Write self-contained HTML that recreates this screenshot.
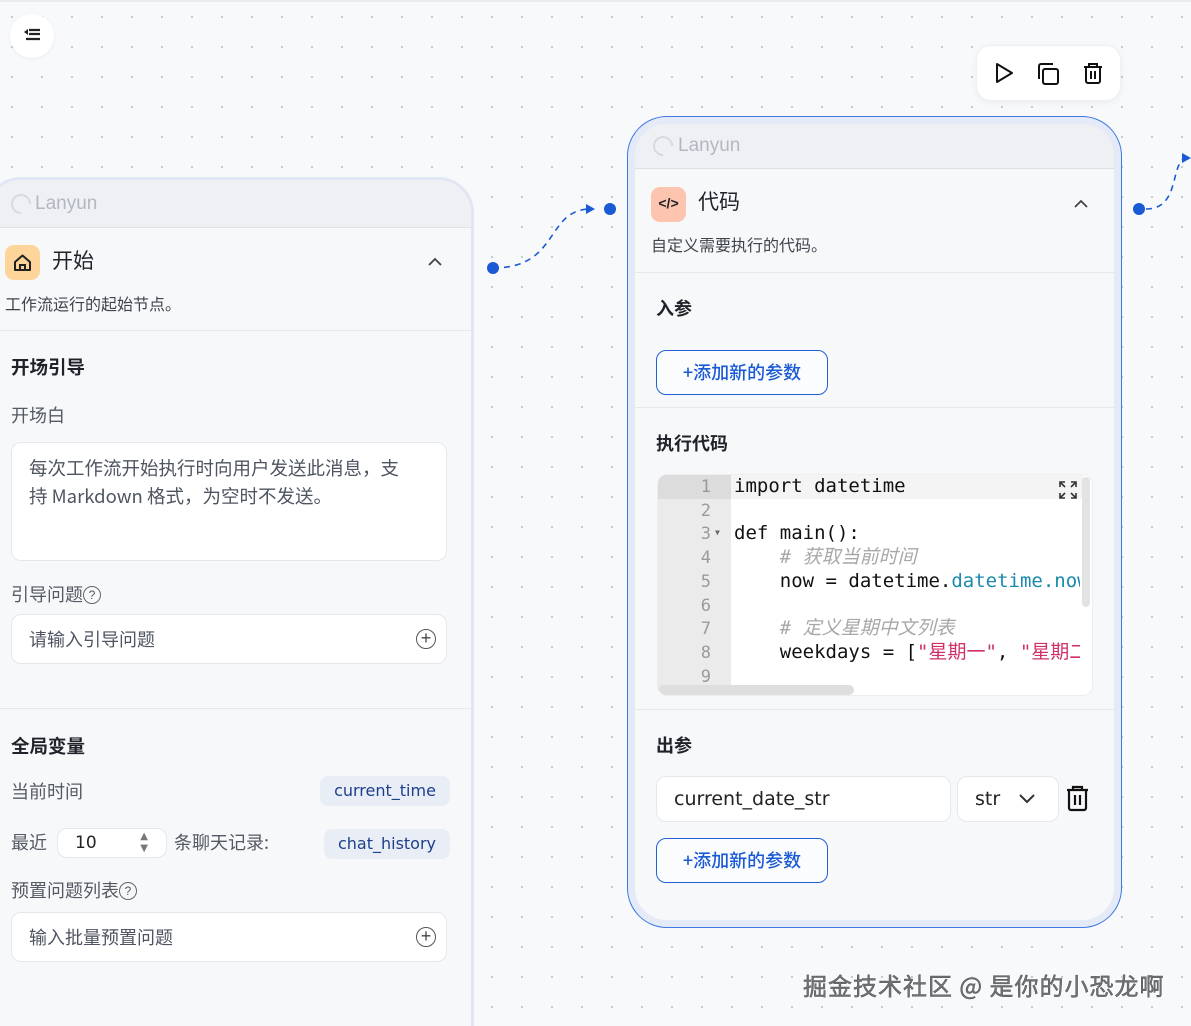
<!DOCTYPE html>
<html><head><meta charset="utf-8"><style>
*{box-sizing:border-box;margin:0;padding:0}
html,body{width:1191px;height:1026px;overflow:hidden}
body{position:relative;background:#f8f9fb;font-family:"Liberation Sans","Noto Sans CJK SC",sans-serif;color:#1f2329;
background-image:radial-gradient(circle,#c3c7cf 1px,transparent 1.3px);background-size:30px 30px;background-position:-3px 2px}
.abs{position:absolute}
.topline{position:absolute;left:0;top:0;width:1191px;height:2px;background:#e9ebef}
.menu{left:10px;top:14px;width:44px;height:44px;border-radius:50%;background:#fff;box-shadow:0 1px 4px rgba(0,0,0,.05)}
.card{position:absolute;background:#f7f8fa;overflow:hidden}
.hdr{height:50px;background:#eef0f4;border-bottom:1px solid #dfe2e7;color:#b3b8c0;font-size:19px;display:flex;align-items:center;padding-left:24px;position:relative}
.hdr .spin{position:absolute;width:20px;height:20px;border:2px solid #d6d9de;border-right-color:transparent;border-radius:50%;transform:rotate(45deg)}
.sec{border-bottom:1px solid #e6e8ec}
.cjk{font-family:"Noto Sans CJK SC",sans-serif}
.lbl{font-size:18px;color:#545a63}
.input{position:absolute;background:#fff;border:1px solid #e4e7ec;border-radius:10px;font-size:18px;color:#4e5560}
.tag{position:absolute;background:#e9edf5;border-radius:8px;color:#1d3f8c;text-align:center;line-height:30px;font-family:"DejaVu Sans",sans-serif;font-size:16px}
.btn{position:absolute;border:1.5px solid #2260d6;border-radius:10px;color:#1a5ad4;font-size:18px;font-weight:500;text-align:center;background:#fbfcfe}
.code{font-family:"DejaVu Sans Mono","Liberation Mono","Noto Sans CJK SC",monospace;font-size:19px}
.q{border:1.4px solid #666;border-radius:50%;display:inline-block;width:18px;height:18px;line-height:16px;text-align:center;font-size:12px;vertical-align:2px;font-family:"Liberation Sans",sans-serif}
.plus{position:absolute;right:10px;top:14px;width:20px;height:20px;border:1.6px solid #555;border-radius:50%;line-height:16px;text-align:center;font-size:18px;color:#444;font-family:"Liberation Sans",sans-serif}
</style></head><body>
<div class="topline"></div>
<div class="abs menu"><svg width="44" height="44" viewBox="0 0 44 44"><path d="M18 15l-4 3 4 3z" fill="#222"/><path d="M19 16h11M19 20h11M16 25h14" stroke="#222" stroke-width="2.2"/></svg></div>

<svg class="abs" style="left:0;top:0" width="1191" height="1026">
<path d="M493 268 C560 268,545 210,590 209" fill="none" stroke="#1a5ad4" stroke-width="1.6" stroke-dasharray="6,5"/>
<path d="M586 204l9 5-9 5z" fill="#1a5ad4"/>
<circle cx="493" cy="268" r="6" fill="#1a5ad4"/>
<circle cx="610" cy="209" r="6" fill="#1a5ad4"/>
<path d="M1146 209 C1180 209,1170 165,1185 158" fill="none" stroke="#1a5ad4" stroke-width="1.6" stroke-dasharray="6,5"/>
<path d="M1182 153l9 5-9 5z" fill="#1a5ad4"/>
<circle cx="1139" cy="209" r="6" fill="#1a5ad4"/>
</svg>

<div class="card" style="left:-15px;top:177px;width:489px;height:900px;border:3px solid #e0e6f4;border-radius:36px">
 <div class="hdr" style="height:48px;padding-left:47px"><span class="spin" style="left:23px"></span>Lanyun</div>
 <div class="sec" style="height:103px;position:relative">
  <div class="abs" style="left:17px;top:17px;width:35px;height:35px;border-radius:9px;background:#fdd49a"><svg width="35" height="35" viewBox="0 0 35 35"><path d="M10 17l7.5-6.5L25 17v8H10z" fill="none" stroke="#222" stroke-width="2" stroke-linejoin="round"/><path d="M15 25v-5h5v5" fill="none" stroke="#222" stroke-width="2"/></svg></div>
  <div class="abs cjk" style="left:64px;top:17px;font-size:21px">开始</div>
  <svg class="abs" style="left:439px;top:28px" width="16" height="12"><path d="M2 9l6-6 6 6" fill="none" stroke="#444" stroke-width="1.8"/></svg>
  <div class="abs cjk" style="left:17px;top:63px;font-size:16px;color:#3f444c">工作流运行的起始节点。</div>
 </div>
 <div class="sec" style="height:378px;position:relative">
  <div class="abs cjk" style="left:23px;top:23px;font-size:18.5px;font-weight:700">开场引导</div>
  <div class="abs cjk lbl" style="left:23px;top:71px">开场白</div>
  <div class="input cjk" style="left:23px;top:111px;width:436px;height:119px;padding:11px 30px 11px 17px;line-height:28px;font-size:18.5px">每次工作流开始执行时向用户发送此消息，支持 Markdown 格式，为空时不发送。</div>
  <div class="abs cjk lbl" style="left:23px;top:250px">引导问题<span class="q">?</span></div>
  <div class="input cjk" style="left:23px;top:283px;width:436px;height:50px;line-height:48px;padding-left:17px">请输入引导问题<span class="plus">+</span></div>
 </div>
 <div style="position:relative">
  <div class="abs cjk" style="left:23px;top:24px;font-size:18.5px;font-weight:700">全局变量</div>
  <div class="abs cjk lbl" style="left:23px;top:69px">当前时间</div>
  <div class="tag" style="left:332px;top:67px;width:130px">current_time</div>
  <div class="abs cjk lbl" style="left:23px;top:120px">最近</div>
  <div class="input" style="left:69px;top:119px;width:110px;height:30px;line-height:28px;padding-left:17px;color:#222;font-family:'DejaVu Sans',sans-serif;font-size:17px">10<span class="abs" style="right:18px;top:2px;font-size:10px;color:#777;line-height:12px">▲<br>▼</span></div>
  <div class="abs cjk lbl" style="left:186px;top:120px">条聊天记录:</div>
  <div class="tag" style="left:336px;top:120px;width:126px">chat_history</div>
  <div class="abs cjk lbl" style="left:23px;top:168px">预置问题列表<span class="q">?</span></div>
  <div class="input cjk" style="left:23px;top:203px;width:436px;height:50px;line-height:48px;padding-left:17px">输入批量预置问题<span class="plus">+</span></div>
 </div>
</div>

<div class="abs" style="left:976px;top:45px;width:145px;height:56px;background:#fff;border-radius:15px;border:1px solid #eef0f3;box-shadow:0 2px 8px rgba(0,0,0,.05)">
<svg width="145" height="56"><path d="M20 18l15 9-15 9z" fill="none" stroke="#111" stroke-width="2" stroke-linejoin="round"/>
<rect x="66" y="23" width="15" height="15" rx="2" fill="none" stroke="#111" stroke-width="2"/><path d="M62 33V20a2 2 0 0 1 2-2h12" fill="none" stroke="#111" stroke-width="2"/>
<path d="M107 21h18M112 21v-3h8v3M109 21v14a2 2 0 0 0 2 2h10a2 2 0 0 0 2-2V21M114 25v8M118 25v8" fill="none" stroke="#111" stroke-width="2"/></svg></div>

<div class="card" style="left:627px;top:116px;width:495px;height:812px;border:1.5px solid #3d78e3;border-radius:40px;box-shadow:inset 0 0 0 7px #e4eaf7">
 <div style="position:absolute;left:7px;top:7px;right:7px;bottom:7px;background:#f7f8fa;border-radius:32px;overflow:hidden">
 <div class="hdr" style="height:45px;padding-left:43px;border-bottom:1px solid #dde0e5"><span class="spin" style="left:18px"></span>Lanyun</div>
 <div class="sec" style="height:104px;position:relative">
  <div class="abs" style="left:16px;top:18px;width:35px;height:35px;border-radius:9px;background:#fdc4b0;text-align:center;line-height:33px;font-size:14px;font-weight:700;color:#222">&lt;/&gt;</div>
  <div class="abs cjk" style="left:63px;top:17px;font-size:21px">代码</div>
  <svg class="abs" style="left:438px;top:29px" width="16" height="12"><path d="M2 9l6-6 6 6" fill="none" stroke="#444" stroke-width="1.8"/></svg>
  <div class="abs cjk" style="left:16px;top:63px;font-size:16px;color:#3f444c">自定义需要执行的代码。</div>
 </div>
 <div class="sec" style="height:135px;position:relative">
  <div class="abs cjk" style="left:21px;top:22px;font-size:18px;font-weight:700">入参</div>
  <div class="btn cjk" style="left:21px;top:77px;width:172px;height:45px;line-height:42px">+添加新的参数</div>
 </div>
 <div class="sec" style="height:302px;position:relative">
  <div class="abs cjk" style="left:21px;top:22px;font-size:18px;font-weight:700">执行代码</div>
  <div class="abs code" style="left:22px;top:66px;width:436px;height:222px;background:#fff;border-radius:10px;overflow:hidden;border:1px solid #eceef1">
   <div class="abs" style="left:0;top:0;width:73px;height:100%;background:#ebebeb"></div>
   <div class="abs" style="left:0;top:0;width:73px;height:24px;background:#dcdcdc"></div>
   <div class="abs" style="left:73px;top:0;width:352px;height:24px;background:#f4f4f4"></div>
   <div class="abs" style="left:0;top:210px;width:196px;height:10px;background:#dedede;border-radius:5px"></div>
   <div class="abs" style="left:424px;top:2px;width:8px;height:130px;background:#e3e3e3;border-radius:4px"></div>
   <div class="abs" style="left:0;top:1px;width:53px;text-align:right;color:#9a9a9a;line-height:23.7px;font-size:17px">1<br>2<br>3<br>4<br>5<br>6<br>7<br>8<br>9</div>
   <div class="abs" style="left:57px;top:53px;font-size:8px;color:#666">▼</div>
   <div class="abs" style="left:76px;top:0px;line-height:23.7px;white-space:pre;color:#111;width:346px;overflow:hidden">import datetime

def main():
    <i style="color:#a8a8a8"># 获取当前时间</i>
    now = datetime.<span style="color:#1a8aad">datetime.now</span>()

    <i style="color:#a8a8a8"># 定义星期中文列表</i>
    weekdays = [<span style="color:#d0306a">"星期一"</span>, <span style="color:#d0306a">"星期二"</span>]
</div>
   <svg class="abs" style="left:400px;top:5px" width="20" height="20"><path d="M2 7V2h5M13 2h5v5M18 13v5h-5M7 18H2v-5M2 2l5 5M18 2l-5 5M18 18l-5-5M2 18l5-5" fill="none" stroke="#333" stroke-width="1.6"/></svg>
  </div>
 </div>
 <div style="position:relative">
  <div class="abs cjk" style="left:21px;top:22px;font-size:18px;font-weight:700">出参</div>
  <div class="input" style="left:21px;top:66px;width:295px;height:46px;line-height:44px;padding-left:17px;color:#222;font-size:19px;font-family:'DejaVu Sans',sans-serif">current_date_str</div>
  <div class="input" style="left:322px;top:66px;width:102px;height:46px;line-height:44px;padding-left:17px;color:#222;font-size:19px;font-family:'DejaVu Sans',sans-serif">str<svg class="abs" style="left:60px;top:15px" width="18" height="14"><path d="M2 3l7 7 7-7" fill="none" stroke="#333" stroke-width="2"/></svg></div>
  <svg class="abs" style="left:430px;top:75px" width="26" height="28"><path d="M2 5h21M8 5V2h9v3M4 5v18a2 2 0 0 0 2 2h13a2 2 0 0 0 2-2V5M10 10v10M15 10v10" fill="none" stroke="#111" stroke-width="2.2"/></svg>
  <div class="btn cjk" style="left:21px;top:128px;width:172px;height:45px;line-height:42px">+添加新的参数</div>
 </div>
 </div>
</div>

<div class="abs cjk" style="left:803px;top:967px;font-size:24px;letter-spacing:1px;color:#707378;-webkit-text-stroke:0.5px #555;text-shadow:1px 1px 0 #fff,-1px -1px 0 #fff;white-space:nowrap">掘金技术社区 @ 是你的小恐龙啊</div>
</body></html>
